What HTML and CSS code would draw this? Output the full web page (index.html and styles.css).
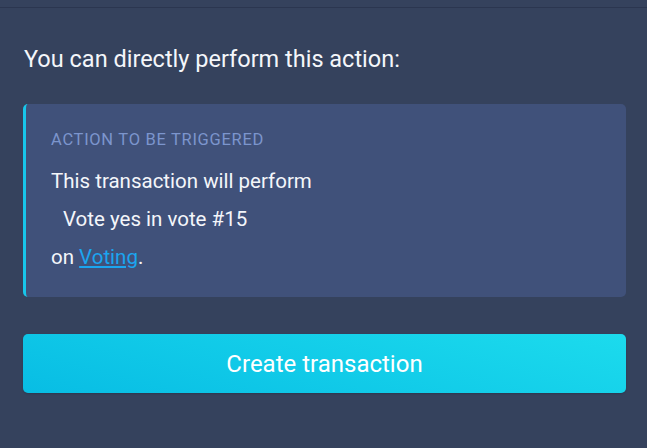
FILE: index.html
```html
<!DOCTYPE html>
<html>
<head>
<meta charset="utf-8">
<link rel="stylesheet" href="styles.css">
</head>
<body>
<div class="topline"></div>
<main class="panel">
  <h2 class="title">You can directly perform this action:</h2>
  <section class="card">
    <div class="label">ACTION TO BE TRIGGERED</div>
    <p class="line">This transaction will perform</p>
    <p class="line indent">Vote yes in vote #15</p>
    <p class="line">on <a class="link" href="#">Voting</a>.</p>
  </section>
  <button class="btn">Create transaction</button>
</main>
</body>
</html>
```
FILE: styles.css
```css
* { box-sizing: border-box; }
html, body { margin: 0; padding: 0; }
body {
  background: #35425d;
  width: 647px;
  height: 448px;
  overflow: hidden;
  font-family: Roboto, "Noto Sans", sans-serif;
  color: #ffffff;
}
.topline {
  height: 8px;
  border-bottom: 1px solid #2b3650;
}
.panel {
  padding: 0 21px 0 23px;
  display: flex;
  flex-direction: column;
}
.title {
  margin: 36px 0 0 1px;
  font-weight: 400;
  font-size: 23.5px;
  line-height: 30px;
  color: #f4f6fa;
}
.card {
  margin-top: 30px;
  background: #40517a;
  border-left: 3px solid #18c6ea;
  border-radius: 5px;
  padding: 25px 20px 20px 25px;
  height: 193px;
}
.label {
  font-size: 16.5px;
  letter-spacing: 0.7px;
  line-height: 22px;
  color: #7c95cd;
  margin-bottom: 11px;
}
.line {
  margin: 0;
  font-size: 20.5px;
  line-height: 38px;
  color: #f4f6fa;
}
.indent { padding-left: 12px; }
.link {
  color: #1ba5f0;
  text-decoration: underline;
}
.btn {
  margin-top: 37px;
  height: 59px;
  border: 0;
  border-radius: 5px;
  background: linear-gradient(15deg, #08bde4 0%, #1cdbed 100%);
  color: #ffffff;
  font-family: inherit;
  font-size: 24px;
  box-shadow: 0 1px 2px rgba(0,0,0,0.15);
}
```
